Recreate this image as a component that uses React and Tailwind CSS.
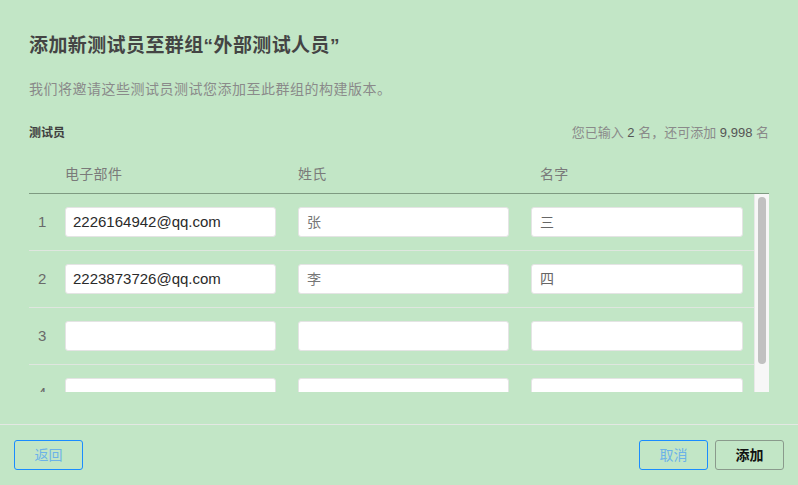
export default function App() {
  const rows = [
    { n: 1, email: "2226164942@qq.com", last: "张", first: "三" },
    { n: 2, email: "2223873726@qq.com", last: "李", first: "四" },
    { n: 3, email: "", last: "", first: "" },
    { n: 4, email: "", last: "", first: "" },
  ];
  const font = { fontFamily: '"Liberation Sans", "Noto Sans CJK SC", sans-serif' };
  return (
    <div className="w-[798px] h-[485px] bg-[#c2e6c6] flex flex-col overflow-hidden" style={font}>
      <div className="flex-1 px-[29px] pt-[34px] flex flex-col">
        <div className="text-[19px] leading-[24px] tracking-[0.4px] font-bold text-[#444]">添加新测试员至群组“外部测试人员”</div>
        <div className="mt-[21px] text-[14px] leading-[20px] tracking-[0.5px] text-[#8a8a8a]">我们将邀请这些测试员测试您添加至此群组的构建版本。</div>
        <div className="mt-[26px] flex justify-between items-center h-[16px]">
          <span className="text-[12px] font-bold text-[#3f3f3f]">测试员</span>
          <span className="text-[13px] text-[#8a8a8a]">
            您已输入 <span className="text-[#555]">2</span> 名，还可添加 <span className="text-[#555]">9,998</span> 名
          </span>
        </div>
        <div className="mt-[23px] flex pb-[9px] border-b border-[#7e9a81] text-[14px] leading-[20px] tracking-[0.3px] text-[#7a7a7a]">
          <div className="w-[36px]" />
          <div className="w-[211px]">电子部件</div>
          <div className="w-[22px]" />
          <div className="w-[211px]">姓氏</div>
          <div className="w-[22px]" />
          <div className="w-[212px] pl-[9px]">名字</div>
        </div>
        <div className="h-[198px] flex overflow-hidden">
          <div className="flex-1 flex flex-col">
            {rows.map((r) => (
              <div key={r.n} className="flex items-center shrink-0 py-[13px] border-b border-[#dfe6df]">
                <div className="w-[36px] pl-[9px] text-[15px] text-[#6a6a6a]">{r.n}</div>
                <div className="w-[211px] h-[30px] bg-white rounded-[3px] border border-[#e4e4e4] px-[7px] flex items-center text-[15px] text-[#2a2a2a]">{r.email}</div>
                <div className="w-[22px]" />
                <div className="w-[211px] h-[30px] bg-white rounded-[3px] border border-[#e4e4e4] px-[8px] flex items-center text-[14px] text-[#777]">{r.last}</div>
                <div className="w-[22px]" />
                <div className="w-[212px] h-[30px] bg-white rounded-[3px] border border-[#e4e4e4] px-[8px] flex items-center text-[14px] text-[#666]">{r.first}</div>
              </div>
            ))}
          </div>
          <div className="w-[15px] bg-[#f7f7f7] border-l border-[#e8e8e8] flex justify-center pt-[3px]">
            <div className="w-[8px] h-[167px] bg-[#c1c1c1] rounded-full" />
          </div>
        </div>
      </div>
      <div className="h-[61px] border-t border-[#e3e8e3] flex items-start justify-between px-[14px] pt-[15px]">
        <button className="w-[69px] h-[30px] border border-[#1a8cff] rounded-[3px] text-[14px] text-[#6cb2e8]">返回</button>
        <div className="flex gap-[7px]">
          <button className="w-[69px] h-[30px] border border-[#1a8cff] rounded-[3px] text-[14px] text-[#6cb2e8]">取消</button>
          <button className="w-[69px] h-[30px] border border-[#8a9a8c] rounded-[3px] text-[14px] font-semibold text-[#111]">添加</button>
        </div>
      </div>
    </div>
  );
}
